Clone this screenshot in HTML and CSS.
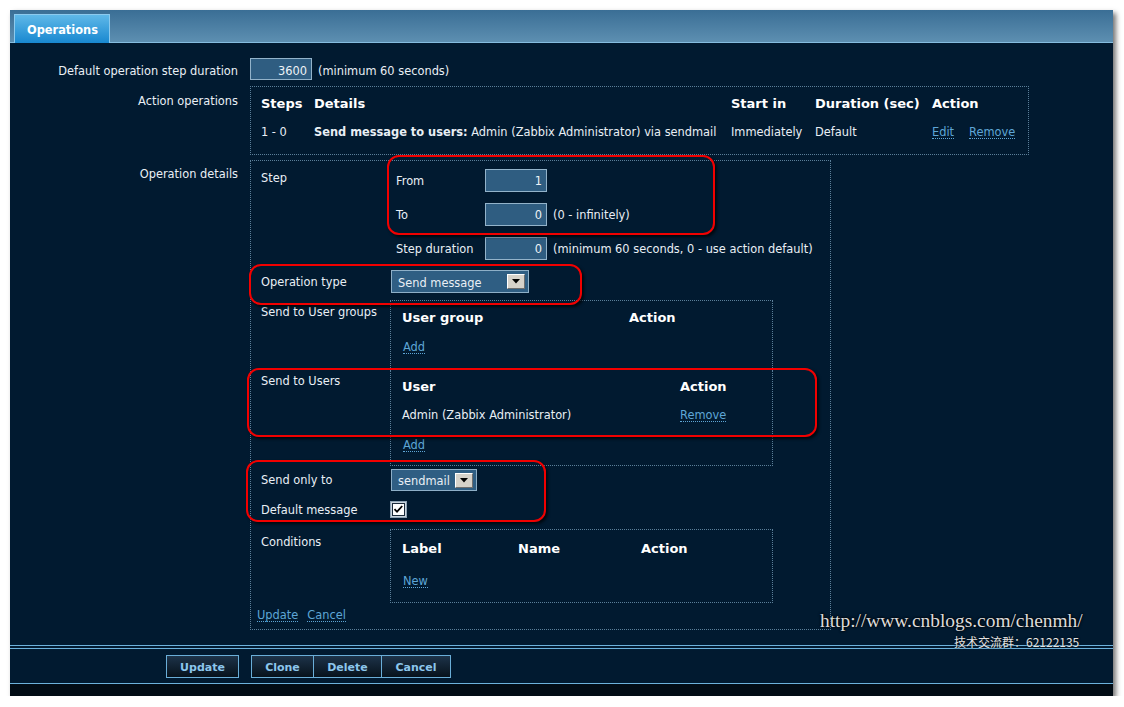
FILE: index.html
```html
<!DOCTYPE html>
<html>
<head>
<meta charset="utf-8">
<link rel="stylesheet" href="styles.css">
</head>
<body>
<div class="window">
  <div class="tabbar"><div class="tab">Operations</div></div>
  <div class="content">
    <div class="form">
      <div class="lbl r1">Default operation step duration</div>
      <div class="val r1"><span class="input w62">3600</span><span class="hint">(minimum 60 seconds)</span></div>

      <div class="lbl r2">Action operations</div>
      <div class="val r2">
        <div class="box ops">
          <div class="opsrow head">
            <span>Steps</span><span>Details</span><span>Start in</span><span>Duration (sec)</span><span>Action</span>
          </div>
          <div class="opsrow">
            <span>1 - 0</span><span><b>Send message to users:</b> Admin (Zabbix Administrator) via sendmail</span><span>Immediately</span><span>Default</span><span><a class="lnk">Edit</a><a class="lnk ml">Remove</a></span>
          </div>
        </div>
      </div>

      <div class="lbl r3">Operation details</div>
      <div class="val r3">
        <div class="box details">
          <div class="drow step">
            <div class="dlbl pt10">Step</div>
            <div class="steptable">
              <div class="srow"><span class="slbl">From</span><span class="input w62 h23">1</span></div>
              <div class="srow"><span class="slbl">To</span><span class="input w62 h23">0</span><span class="hint">(0 - infinitely)</span></div>
              <div class="srow"><span class="slbl">Step duration</span><span class="input w62 h23">0</span><span class="hint">(minimum 60 seconds, 0 - use action default)</span></div>
            </div>
          </div>
          <div class="drow optype">
            <div class="dlbl">Operation type</div>
            <div class="select sel1"><span>Send message</span><span class="ddbtn"><svg width="8" height="5" viewBox="0 0 8 5"><path d="M0 0H8L4 4.5Z" fill="#000"/></svg></span></div>
          </div>
          <div class="drow groups">
            <div class="dlbl pt5">Send to User groups</div>
            <div class="box sub gbox">
              <div class="subrow head h28 c227"><span>User group</span><span>Action</span></div>
              <div class="subrow h30"><a class="lnk add">Add</a></div>
            </div>
          </div>
          <div class="drow users">
            <div class="dlbl pt4">Send to Users</div>
            <div class="box sub ubox">
              <div class="subrow head h28 c278"><span>User</span><span>Action</span></div>
              <div class="subrow h28 c278"><span>Admin (Zabbix Administrator)</span><span><a class="lnk">Remove</a></span></div>
              <div class="subrow h32"><a class="lnk add">Add</a></div>
            </div>
          </div>
          <div class="drow sendonly">
            <div class="dlbl">Send only to</div>
            <div class="select sel2"><span>sendmail</span><span class="ddbtn"><svg width="8" height="5" viewBox="0 0 8 5"><path d="M0 0H8L4 4.5Z" fill="#000"/></svg></span></div>
          </div>
          <div class="drow defmsg">
            <div class="dlbl">Default message</div>
            <span class="check"><svg width="17" height="17" viewBox="0 0 17 17"><rect x="0.5" y="0.5" width="16" height="16" fill="#c9d3dc" stroke="#8ea3b5"/><rect x="2.5" y="2.5" width="12" height="12" fill="#fff" stroke="#1a2a3a"/><path d="M4.5 8.2L7 10.8L12.2 5" fill="none" stroke="#000" stroke-width="1.8"/></svg></span>
          </div>
          <div class="drow conds">
            <div class="dlbl pt6">Conditions</div>
            <div class="box sub cbox">
              <div class="subrow head h28 c3"><span>Label</span><span>Name</span><span>Action</span></div>
              <div class="subrow h36"><a class="lnk add">New</a></div>
            </div>
          </div>
          <div class="drow links">
            <a class="lnk">Update</a><a class="lnk ml2">Cancel</a>
          </div>
        </div>
      </div>
    </div>
  </div>
  <div class="footer">
    <div class="footer-inner">
      <span class="btn b-update">Update</span>
      <span class="btn b-clone">Clone</span>
      <span class="btn b-delete">Delete</span>
      <span class="btn b-cancel">Cancel</span>
    </div>
    <div class="footer-bottom"></div>
  </div>

  <div class="mark m1"></div>
  <div class="mark m2"></div>
  <div class="mark m3"></div>
  <div class="mark m4"></div>

  <div class="wm-url">http://www.cnblogs.com/chenmh/</div>
  <div class="wm-cn">技术交流群：62122135</div>
</div>
</body>
</html>
```
FILE: styles.css
```css
* { box-sizing: border-box; }
html, body { margin: 0; padding: 0; background: #ffffff; }
body {
  font-family: "DejaVu Sans", Verdana, sans-serif;
  font-size: 11.4px;
  line-height: 14px;
  color: #e9eff5;
}
.window {
  position: relative;
  margin: 10px 0 0 10px;
  width: 1103px;
  height: 686px;
  background: #011a30;
  box-shadow: 3px 3px 5px rgba(0,0,0,0.55);
  display: flex;
  flex-direction: column;
}
.tabbar {
  height: 33px;
  flex: none;
  background: linear-gradient(#3a6e95, #5d8fb1);
  border-bottom: 1px solid #86bddf;
  padding: 4px 0 0 4px;
  display: flex;
}
.tab {
  width: 96px;
  height: 29px;
  border: 1px solid #8ccaee;
  border-bottom: none;
  background: linear-gradient(#5fb8e8, #1888d0);
  color: #ffffff;
  font-weight: bold;
  font-size: 11.4px;
  padding: 8px 0 0 12px;
}
.content {
  flex: 1;
  padding-top: 15px;
}
.form {
  display: grid;
  grid-template-columns: 228px 1fr;
  column-gap: 12px;
}
.lbl { text-align: right; }
.lbl.r1 { height: 22px; padding-top: 6px; margin-bottom: 6px; }
.val.r1 { height: 22px; display: flex; align-items: flex-start; margin-bottom: 6px; }
.val.r1 .hint { padding-top: 6px; }
.lbl.r2 { padding-top: 8px; }
.val.r2 { margin-bottom: 5px; }
.lbl.r3 { padding-top: 7px; }

.input {
  display: inline-block;
  height: 22px;
  line-height: 20px;
  padding-top: 2px;
  background: #2f5d81;
  border: 1px solid #93b3ca;
  color: #eef3f7;
  text-align: right;
  padding-right: 4px;
}
.input.h23 { height: 23px; line-height: 21px; padding-top: 1px; }
.w62 { width: 62px; }
.hint { margin-left: 6px; }

.box { border: 1px dotted #5b7f99; }
.ops { width: 779px; height: 69px; padding: 3px 0 0 10px; }
.opsrow {
  display: grid;
  grid-template-columns: 53px 417px 84px 117px 1fr;
  height: 28px;
  align-items: center;
}
.head { font-weight: bold; font-size: 13px; color: #ffffff; }
.opsrow b { font-size: 11.4px; }
.lnk {
  color: #5ea6d6;
  text-decoration: none;
  border-bottom: 1px dotted #5ea6d6;
  line-height: 12px;
  display: inline-block;
}
.ml { margin-left: 15px; }
.ml2 { margin-left: 9px; }

.details { width: 581px; height: 470px; padding: 0 0 0 10px; }
.drow { display: flex; }
.dlbl { width: 129px; flex: none; }
.pt10 { padding-top: 10px; }
.pt4 { padding-top: 4px; }
.pt5 { padding-top: 5px; }
.pt6 { padding-top: 6px; }
.step { height: 104px; }
.steptable { padding-top: 2px; }
.srow { height: 34px; display: flex; align-items: center; padding-left: 6px; }
.srow .hint { padding-top: 1px; }
.slbl { width: 89px; padding-top: 1px; }
.optype { height: 33px; align-items: center; }
.select {
  display: flex;
  align-items: center;
  justify-content: space-between;
  background: #2f5e83;
  border: 1px solid #8eafc7;
  padding: 0 3px 0 6px;
  margin-left: 1px;
}
.select > span:first-child { padding-top: 2px; }
.sel1 { width: 138px; height: 23px; }
.sel2 { width: 86px; height: 22px; }
.ddbtn {
  width: 18px;
  height: 15px;
  background: #d6d2ca;
  border: 1px solid;
  border-color: #ffffff #6e6e6e #6e6e6e #ffffff;
  display: flex;
  align-items: center;
  justify-content: center;
}
.ddbtn svg { display: block; }
.groups { margin-top: 2px; }
.sub { width: 383px; padding-left: 11px; }
.gbox { height: 70px; padding-top: 3px; }
.ubox { height: 96px; border-top: none; padding-top: 3px; }
.cbox { height: 74px; padding-top: 5px; }
.subrow { display: grid; align-items: center; }
.c227 { grid-template-columns: 227px 1fr; }
.c278 { grid-template-columns: 278px 1fr; }
.c3 { grid-template-columns: 116px 123px 1fr; }
.h28 { height: 28px; }
.h30 { height: 30px; }
.h32 { height: 32px; }
.h36 { height: 36px; }
.subrow .lnk { justify-self: start; }
.add { margin-left: 1px; }
.sendonly { height: 28px; align-items: center; }
.defmsg { height: 31px; align-items: center; }
.check { display: block; width: 17px; height: 17px; }
.check svg { display: block; }
.conds { margin-top: 4px; }
.links { height: 22px; align-items: center; margin-left: -4px; padding-top: 2px; }

.footer { flex: none; border-top: 1px solid #6cb2dc; padding-top: 2px; }
.footer-inner {
  height: 36px;
  border-top: 1px solid #6cb2dc;
  border-bottom: 1px solid #6cb2dc;
  display: flex;
  align-items: flex-start;
  padding: 6px 0 0 156px;
}
.footer-bottom { height: 12px; background: #020c15; }
.btn {
  height: 23px;
  border: 1px solid #6aaed8;
  background: linear-gradient(#1d3349, #07121c);
  color: #8cc6ec;
  font-weight: bold;
  font-size: 11px;
  display: flex;
  align-items: center;
  justify-content: center;
  padding-top: 2px;
}
.b-update { width: 73px; }
.b-clone { width: 63px; margin-left: 12px; }
.b-delete { width: 69px; margin-left: -1px; }
.b-cancel { width: 70px; margin-left: -1px; }

.mark {
  position: absolute;
  border: 2px solid #f20000;
  border-radius: 12px;
  box-shadow: 2px 2px 3px rgba(0,0,0,0.7);
  pointer-events: none;
}
.m1 { left: 377px; top: 145px; width: 328px; height: 80px; }
.m2 { left: 239px; top: 254px; width: 333px; height: 41px; }
.m3 { left: 237px; top: 358px; width: 570px; height: 69px; }
.m4 { left: 236px; top: 450px; width: 300px; height: 62px; }

.wm-url {
  position: absolute;
  left: 810px;
  top: 600px;
  font-family: "Liberation Serif", "Times New Roman", serif;
  font-size: 19.4px;
  line-height: 22px;
  color: #dcdcdc;
  text-shadow: 0 0 3px #000, 0 0 2px #000;
}
.wm-cn {
  position: absolute;
  left: 944px;
  top: 625px;
  font-family: "Noto Sans CJK SC", sans-serif;
  font-size: 12px;
  line-height: 14px;
  color: #e4e4e4;
  text-shadow: 0 0 2px #000;
}
```
